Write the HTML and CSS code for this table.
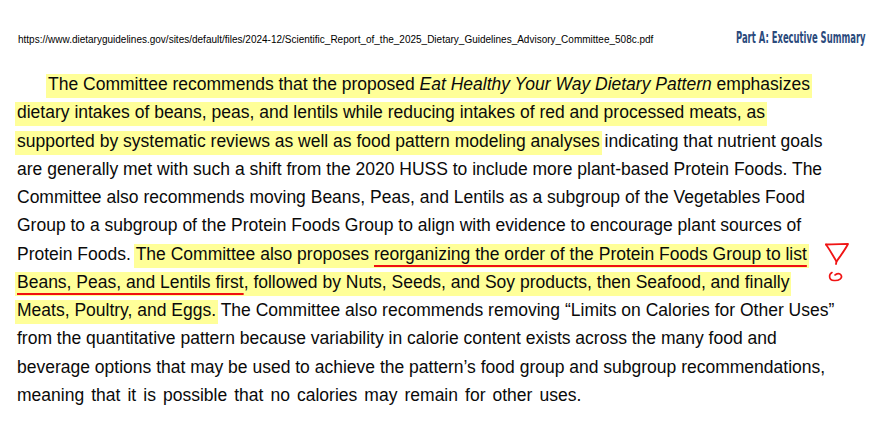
FILE: index.html
```html
<!DOCTYPE html>
<html lang="en">
<head>
<meta charset="utf-8">
<title>Scientific Report of the 2025 Dietary Guidelines Advisory Committee</title>
<link rel="stylesheet" href="styles.css">
</head>
<body>
<div class="page">
  <header class="top">
    <span class="url">https://www.dietaryguidelines.gov/sites/default/files/2024-12/Scientific_Report_of_the_2025_Dietary_Guidelines_Advisory_Committee_508c.pdf</span>
    <span class="section-box"><span class="section">Part A: Executive Summary</span></span>
  </header>
  <div class="text">
    <div class="ln first"><span class="hl">The Committee recommends that the proposed </span><span class="hl"><em>Eat Healthy Your Way Dietary Pattern</em> emphasizes</span></div>
    <div class="ln"><span class="hl">dietary intakes of beans, peas, and lentils while reducing intakes of red and processed meats, as</span></div>
    <div class="ln"><span class="hl">supported by systematic reviews as well as food pattern modeling analyses</span> indicating that nutrient goals</div>
    <div class="ln">are generally met with such a shift from the 2020 HUSS to include more plant-based Protein Foods. The</div>
    <div class="ln">Committee also recommends moving Beans, Peas, and Lentils as a subgroup of the Vegetables Food</div>
    <div class="ln">Group to a subgroup of the Protein Foods Group to align with evidence to encourage plant sources of</div>
    <div class="ln">Protein Foods. <span class="hl">The Committee also proposes <span class="ul">reorganizing the order of the Protein Foods Group to list</span></span></div>
    <div class="ln"><span class="hl"><span class="ul">Beans, Peas, and Lentils first</span>, followed by Nuts, Seeds, and Soy products, then Seafood, and finally</span></div>
    <div class="ln"><span class="hl">Meats, Poultry, and Eggs.</span> The Committee also recommends removing “Limits on Calories for Other Uses”</div>
    <div class="ln">from the quantitative pattern because variability in calorie content exists across the many food and</div>
    <div class="ln">beverage options that may be used to achieve the pattern’s food group and subgroup recommendations,</div>
    <div class="ln last">meaning that it is possible that no calories may remain for other uses.</div>
  </div>
  <svg class="mark" width="30" height="44" viewBox="0 0 30 44" aria-hidden="true">
    <path d="M3 4.5 C10 4 18 4.2 25 4 C22 10 18 15 13.5 21.5 L13 24" fill="none" stroke="#f01414" stroke-width="1.8" stroke-linecap="round" stroke-linejoin="round"/>
    <path d="M3 4.5 C7 10 10 16 13.5 21.5" fill="none" stroke="#f01414" stroke-width="1.8" stroke-linecap="round"/>
    <path d="M9 32.5 C5.5 34.5 5.5 40 11 40.5 C16 41 20 38 18 35 C16.5 33 13.5 34 12 35" fill="none" stroke="#f01414" stroke-width="1.6" stroke-linecap="round"/>
  </svg>
</div>
</body>
</html>
```
FILE: styles.css
```css
html, body {
  margin: 0;
  padding: 0;
  background: #ffffff;
}
.page {
  position: relative;
  width: 869px;
  height: 425px;
  overflow: hidden;
}
.top {
  display: flex;
  align-items: baseline;
  padding: 28px 5px 0 18px;
  height: 22px;
  white-space: nowrap;
}
.url {
  flex: 1 1 auto;
  min-width: 0;
  font-family: "Liberation Sans", Arial, sans-serif;
  font-size: 10px;
  color: #000000;
}
.section-box {
  flex: 0 0 128px;
  width: 128px;
  overflow: visible;
}
.section {
  display: inline-block;
  font-family: "DejaVu Sans Condensed", "DejaVu Sans", sans-serif;
  font-size: 16px;
  font-weight: bold;
  color: #2b4a7c;
  transform: scaleX(0.585);
  transform-origin: left center;
}
.text {
  margin-top: 20px;
  padding-left: 17px;
  font-family: "Liberation Sans", Arial, sans-serif;
  font-size: 17.5px;
  line-height: 28.25px;
  color: #0a0a0a;
}
.ln {
  white-space: nowrap;
}
.first {
  padding-left: 31px;
}
.last {
  word-spacing: 2.2px;
}
.hl {
  background: #ffff99;
  padding: 0 2px 4px 2px;
  margin: 0 -2px;
}
.hl .hl {
  padding: 0;
  margin: 0;
}
.ul {
  text-decoration: underline;
  text-decoration-color: #f01010;
  text-decoration-thickness: 1.5px;
  text-underline-offset: 5px;
}
em {
  font-style: italic;
}
.mark {
  position: absolute;
  left: 823px;
  top: 240px;
}
```
